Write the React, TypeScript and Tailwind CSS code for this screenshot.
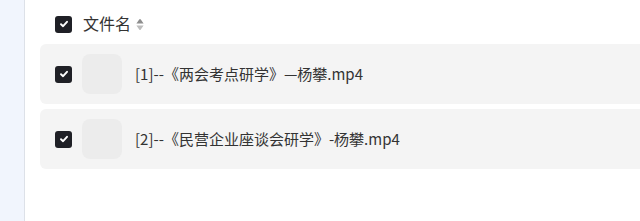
import React from 'react';

const FILES = [
  { id: 1, name: '[1]--《两会考点研学》—杨攀.mp4' },
  { id: 2, name: '[2]--《民营企业座谈会研学》-杨攀.mp4' },
];

const Check = () => (
  <span className="w-[17px] h-[17px] rounded-[3px] bg-[#1f2026] flex items-center justify-center shrink-0">
    <svg width="10" height="10" viewBox="0 0 10 10">
      <path d="M2 5.2 L4.1 7.2 L8 2.8" fill="none" stroke="#fff" strokeWidth="1.9" strokeLinecap="round" strokeLinejoin="round" />
    </svg>
  </span>
);

export default function App() {
  return (
    <div className="w-[640px] h-[221px] flex bg-white overflow-hidden" style={{ fontFamily: '"Noto Sans", "Noto Sans CJK SC", sans-serif' }}>
      <div className="w-[25px] shrink-0 bg-[#f1f5fd] border-r border-[#dde1e8]" />
      <div className="flex-1 pl-[15px] pt-[15px] min-w-0">
        <div className="flex items-center h-[18px] pl-[15px] mb-[11px]">
          <Check />
          <span className="ml-[11px] text-[16px] text-[#333] leading-none">文件名</span>
          <svg className="ml-[5px]" width="8" height="13" viewBox="0 0 8 13">
            <path d="M4 1 Q4.4 1 4.8 1.6 L7.6 5.6 L0.4 5.6 L3.2 1.6 Q3.6 1 4 1 Z" fill="#8e8e8e" />
            <path d="M4 12 Q4.4 12 4.8 11.4 L7.6 7.4 L0.4 7.4 L3.2 11.4 Q3.6 12 4 12 Z" fill="#bdbdbd" />
          </svg>
        </div>
        <div className="flex flex-col gap-[5px]">
          {FILES.map(f => (
            <div key={f.id} className="h-[60px] w-[620px] bg-[#f4f4f4] rounded-l-[6px] flex items-center pl-[15px]">
              <Check />
              <div className="ml-[10px] w-[40px] h-[40px] rounded-[8px] bg-[#ececec] shrink-0" />
              <span
                className="ml-[13px] text-[15px] text-[#333] whitespace-nowrap"
                style={{ fontFamily: '"Noto Sans CJK SC", "Noto Sans", sans-serif' }}
              >
                {f.name}
              </span>
            </div>
          ))}
        </div>
      </div>
    </div>
  );
}
